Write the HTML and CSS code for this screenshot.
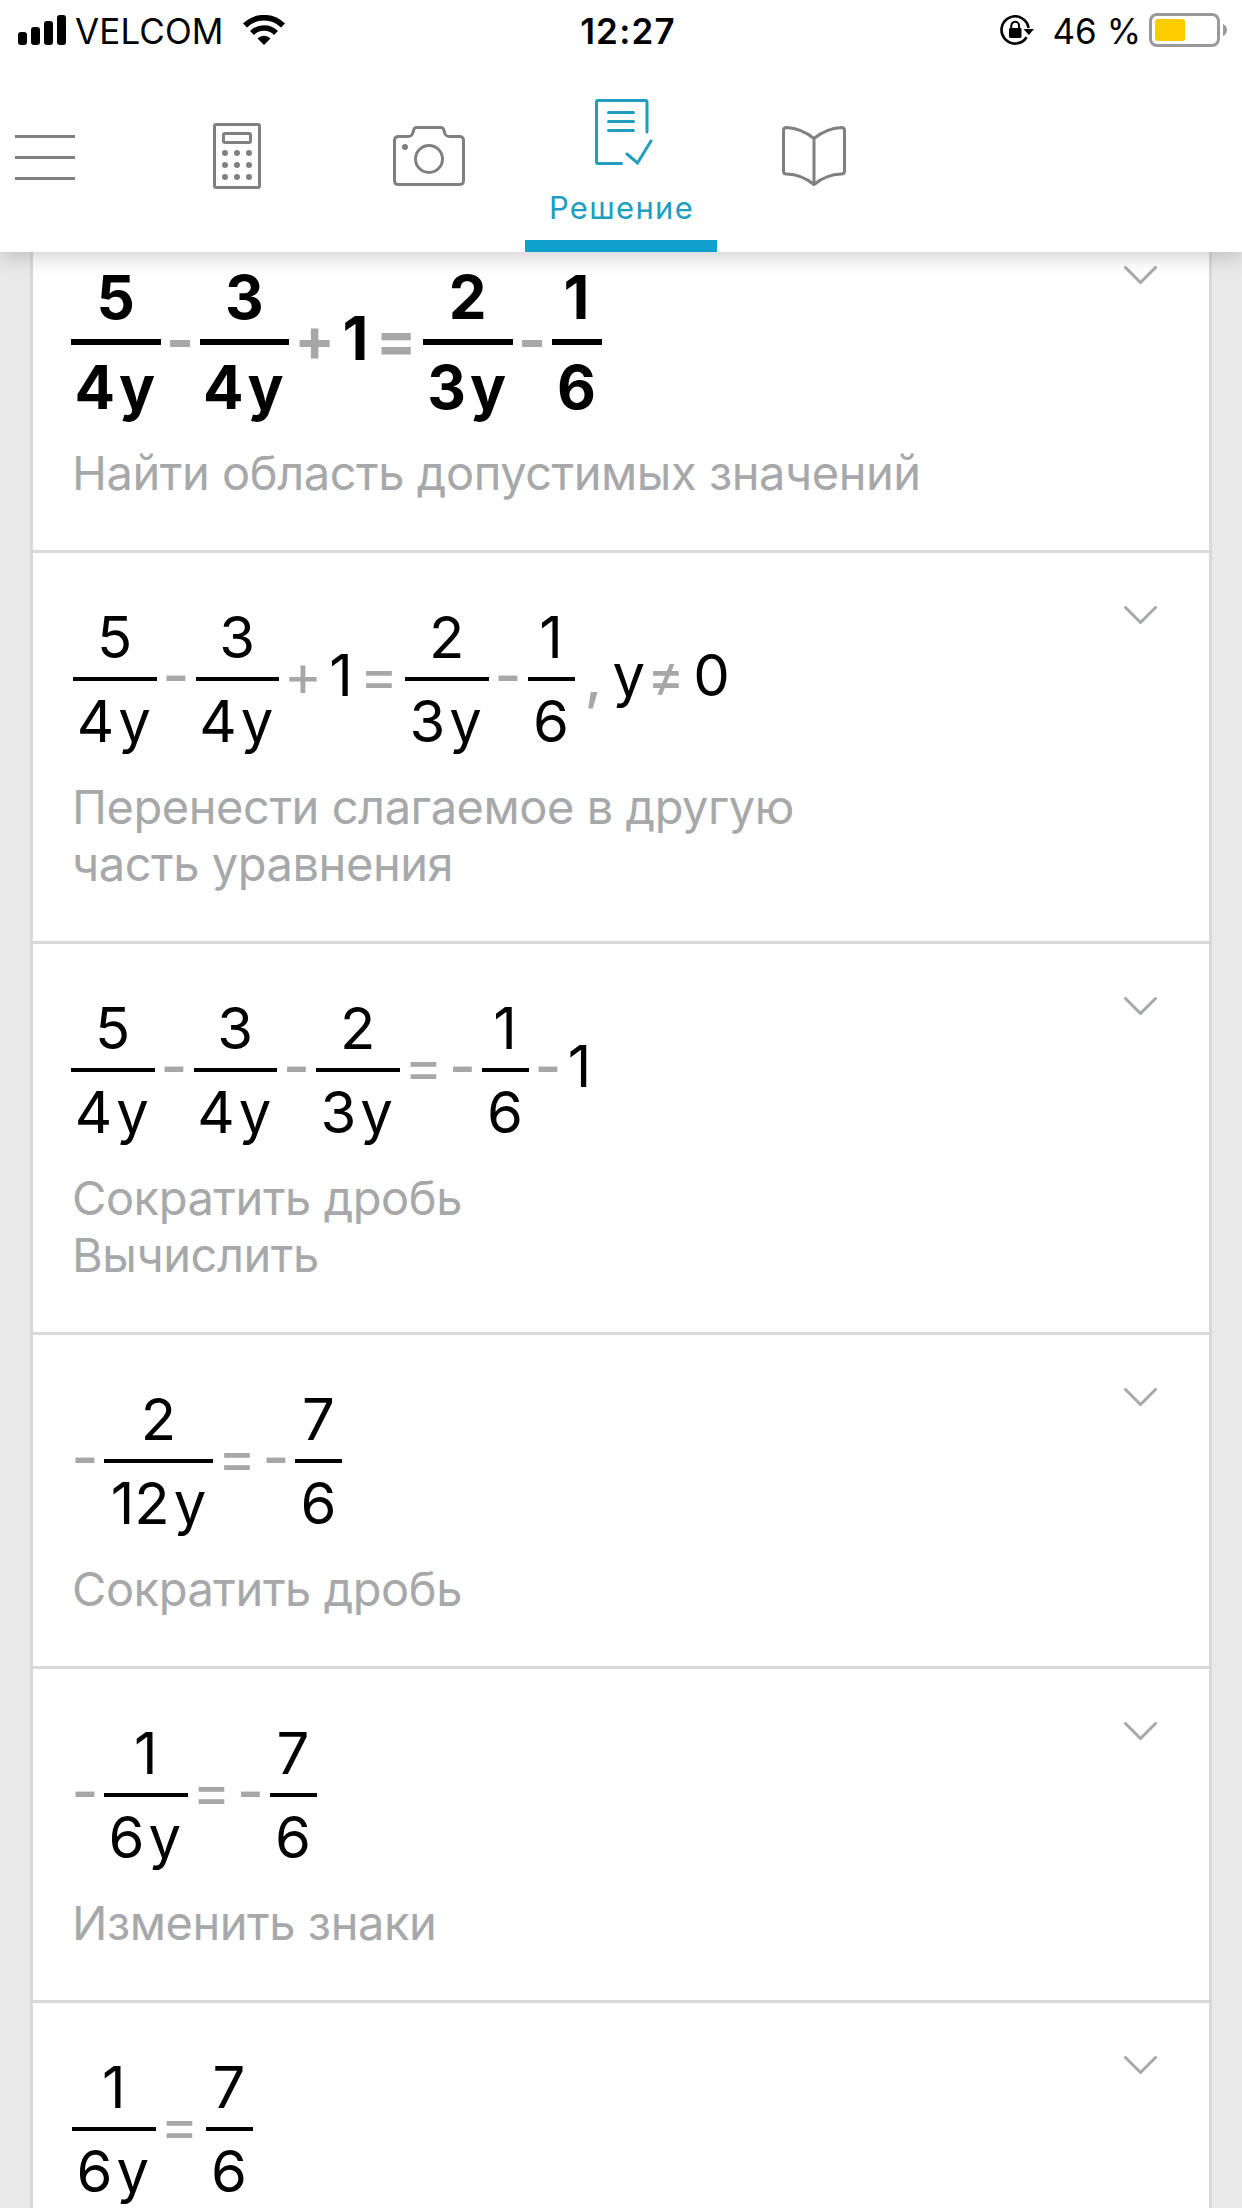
FILE: index.html
```html
<!DOCTYPE html>
<html lang="ru">
<head>
  <meta charset="UTF-8" />
  <meta name="viewport" content="width=device-width, initial-scale=1" />
  <title>Решение</title>
  <link rel="stylesheet" href="styles.css">
</head>
<body>

  <header class="header">
    <div class="status">
      <div class="status-left">
        <svg class="signal" width="48" height="30" viewBox="0 0 48 30">
          <rect x="0" y="17" width="9" height="13" rx="3" />
          <rect x="13" y="12" width="9" height="18" rx="3" />
          <rect x="26" y="6" width="9" height="24" rx="3" />
          <rect x="39" y="0" width="9" height="30" rx="3" />
        </svg>
        <span class="carrier">VELCOM</span>
        <svg class="wifi" width="42" height="30" viewBox="0 0 42 30">
          <path d="M2 10.500a27 27 0 0 1 38 0" fill="none" stroke="#000" stroke-width="5.600" />
          <path d="M9 18a17 17 0 0 1 24 0" fill="none" stroke="#000" stroke-width="5.600" />
          <path d="M14.500 23.500a9.300 9.300 0 0 1 13 0L21 30z" />
        </svg>
      </div>
      <div class="time">12:27</div>
      <div class="status-right">
        <svg class="lock" width="34" height="30" viewBox="0 0 34 30">
          <path d="M28.600 13A13.600 13.600 0 1 0 26.600 22.300" fill="none" stroke="#000" stroke-width="2.600" />
          <path d="M23.500 14h10.500l-5.200 6z" />
          <rect x="9" y="13" width="12.500" height="10" rx="1.400" />
          <path d="M11.300 14v-3.300a3.900 3.900 0 0 1 7.800 0V14" fill="none" stroke="#000" stroke-width="2" />
        </svg>
        <span class="percent">46 %</span>
        <svg class="battery" width="78" height="34" viewBox="0 0 78 34">
          <rect x="1.500" y="1.500" width="68" height="31" rx="6.500" fill="none" stroke="#999" stroke-width="3" />
          <rect x="6" y="6" width="30" height="22" rx="2.500" fill="#fc0" />
          <path d="M74 11q4 2 4 6t-4 6z" fill="#999" />
        </svg>
      </div>
    </div>

    <nav class="tabs">
      <a class="menu">
        <svg width="60" height="45" viewBox="0 0 60 45"><path d="M0 1.500h60M0 22.500h60M0 43.500h60" /></svg>
      </a>
      <a class="tab">
        <svg width="48" height="66" viewBox="0 0 48 66">
          <rect x="1.500" y="1.500" width="45" height="63" rx="1.500" />
          <rect x="10.500" y="10.500" width="27" height="9" rx="1.500" />
          <g class="dots">
            <circle cx="12" cy="30" r="3" /><circle cx="24" cy="30" r="3" /><circle cx="36" cy="30" r="3" />
            <circle cx="12" cy="42" r="3" /><circle cx="24" cy="42" r="3" /><circle cx="36" cy="42" r="3" />
            <circle cx="12" cy="54" r="3" /><circle cx="24" cy="54" r="3" /><circle cx="36" cy="54" r="3" />
          </g>
        </svg>
      </a>
      <a class="tab">
        <svg width="72" height="60" viewBox="0 0 72 60">
          <path d="M5.500 10.500H15q4 0 5-4l.7-2.500q.6-2.500 2.800-2.500H48q2.200 0 2.800 2.500l.7 2.500q1 4 5 4h10q4 0 4 4v40q0 4-4 4h-61q-4 0-4-4v-40q0-4 4-4z" />
          <circle cx="36" cy="33" r="13.500" />
          <g class="dots"><circle cx="12" cy="21" r="3" /></g>
        </svg>
      </a>
      <a class="tab active">
        <svg width="58" height="66" viewBox="0 0 58 66">
          <path d="M52 33V3q0-1.500-1.500-1.500H3Q1.500 1.500 1.500 3v60q0 1.500 1.500 1.500h23.500M13.500 13.500h25M13.500 22.500h25M13.500 31.500h25M32 55l10.500 9L56 42" />
        </svg>
        <span class="tab-label">Решение</span>
      </a>
      <a class="tab book">
        <svg width="64" height="60" viewBox="0 0 64 60">
          <path d="M32 12.500Q20 2.500 4.500 1.500q-3 0-3 3V45q0 3 3 3Q20 48.500 32 58.500 44 48.500 59.500 48q3 0 3-3V4.500q0-3-3-3Q44 2.500 32 12.500zM32 12.500v46" />
        </svg>
      </a>
    </nav>
  </header>

  <main class="steps">
    <section class="step first">
      <div class="body">
        <div class="math">
          <span class="frac wide"><span>5</span><span>4<b>y</b></span></span>
          <span class="op">-</span>
          <span class="frac wide"><span>3</span><span>4<b>y</b></span></span>
          <span class="op plus">+</span>
          <span class="num">1</span>
          <span class="op eq">=</span>
          <span class="frac wide"><span>2</span><span>3<b>y</b></span></span>
          <span class="op">-</span>
          <span class="frac"><span>1</span><span>6</span></span>
        </div>
        <p class="hint">Найти область допустимых значений</p>
      </div>
      <svg class="chevron" width="33" height="18" viewBox="0 0 33 18"><path d="M1.500 1.500l15 15 15-15" /></svg>
    </section>

    <section class="step">
      <div class="body">
        <div class="math indent">
          <span class="frac wide"><span>5</span><span>4<b>y</b></span></span>
          <span class="op">-</span>
          <span class="frac wide"><span>3</span><span>4<b>y</b></span></span>
          <span class="op plus">+</span>
          <span class="num">1</span>
          <span class="op eq">=</span>
          <span class="frac wide"><span>2</span><span>3<b>y</b></span></span>
          <span class="op">-</span>
          <span class="frac"><span>1</span><span>6</span></span>
          <span class="op comma">,</span>
          <span class="num">y</span>
          <span class="op neq">≠</span>
          <span class="num zero">0</span>
        </div>
        <p class="hint">Перенести слагаемое в другую<br>часть уравнения</p>
      </div>
      <svg class="chevron" width="33" height="18" viewBox="0 0 33 18"><path d="M1.500 1.500l15 15 15-15" /></svg>
    </section>

    <section class="step">
      <div class="body">
        <div class="math">
          <span class="frac wide"><span>5</span><span>4<b>y</b></span></span>
          <span class="op">-</span>
          <span class="frac wide"><span>3</span><span>4<b>y</b></span></span>
          <span class="op">-</span>
          <span class="frac wide"><span>2</span><span>3<b>y</b></span></span>
          <span class="op eq">=</span>
          <span class="op sign">-</span>
          <span class="frac"><span>1</span><span>6</span></span>
          <span class="op">-</span>
          <span class="num last">1</span>
        </div>
        <p class="hint">Сократить дробь<br>Вычислить</p>
      </div>
      <svg class="chevron" width="33" height="18" viewBox="0 0 33 18"><path d="M1.500 1.500l15 15 15-15" /></svg>
    </section>

    <section class="step">
      <div class="body">
        <div class="math shift">
          <span class="op sign">-</span>
          <span class="frac wider"><span>2</span><span>12<b>y</b></span></span>
          <span class="op eq">=</span>
          <span class="op sign">-</span>
          <span class="frac"><span>7</span><span>6</span></span>
        </div>
        <p class="hint">Сократить дробь</p>
      </div>
      <svg class="chevron" width="33" height="18" viewBox="0 0 33 18"><path d="M1.500 1.500l15 15 15-15" /></svg>
    </section>

    <section class="step">
      <div class="body">
        <div class="math shift">
          <span class="op sign">-</span>
          <span class="frac wide"><span>1</span><span>6<b>y</b></span></span>
          <span class="op eq">=</span>
          <span class="op sign">-</span>
          <span class="frac"><span>7</span><span>6</span></span>
        </div>
        <p class="hint">Изменить знаки</p>
      </div>
      <svg class="chevron" width="33" height="18" viewBox="0 0 33 18"><path d="M1.500 1.500l15 15 15-15" /></svg>
    </section>

    <section class="step">
      <div class="body">
        <div class="math shift">
          <span class="frac wide"><span>1</span><span>6<b>y</b></span></span>
          <span class="op eq">=</span>
          <span class="frac"><span>7</span><span>6</span></span>
        </div>
      </div>
      <svg class="chevron" width="33" height="18" viewBox="0 0 33 18"><path d="M1.500 1.500l15 15 15-15" /></svg>
    </section>
  </main>

</body>
</html>
```
FILE: styles.css
```css
* {
  box-sizing: border-box;
}

body {
  margin: 0;
  height: 2208px;
  overflow: hidden;
  background: #e9e9e9;
  font-family: Inter, "Liberation Sans", sans-serif;
  color: #000;
}

svg {
  display: block;
  flex: none;
}

.header {
  position: relative;
  z-index: 1;
  height: 252px;
  background: #fff;
  box-shadow: 0 4px 20px rgba(0, 0, 0, 0.2);
}

/* status bar */
.status {
  display: grid;
  grid-template-columns: 1fr auto 1fr;
  align-items: center;
  height: 60px;
  padding: 0 15px 0 18px;
  font-size: 35px;
  line-height: 58px;
}

.status-left,
.status-right {
  display: flex;
  align-items: center;
}

.status-right {
  justify-content: flex-end;
}

.status span,
.time {
  padding-top: 2px;
}

.carrier {
  margin-left: 9px;
  letter-spacing: 0.1px;
}

.wifi {
  margin-left: 19px;
}

.time {
  font-weight: 600;
  letter-spacing: 1.2px;
  padding-left: 11px;
}

.percent {
  margin: 0 8px 0 18px;
}

/* tabs */
.tabs {
  display: flex;
  height: 192px;
  padding-left: 15px;
}

.menu {
  display: flex;
  align-items: center;
  width: 126px;
  padding-top: 3px;
}

.tab {
  display: flex;
  flex-direction: column;
  align-items: center;
  justify-content: center;
  width: 192px;
}

.tab.book {
  padding-left: 2px;
}

.tabs svg {
  fill: none;
  stroke: #808080;
  stroke-width: 3;
}

.tabs .dots {
  fill: #808080;
  stroke: none;
}

.tab.active {
  justify-content: flex-start;
  padding-top: 39px;
  border-bottom: 12px solid #0fa1cd;
}

.tab.active svg {
  stroke: #219dbf;
  stroke-linecap: round;
  margin-left: 5px;
}

.tab-label {
  margin-top: 23px;
  padding-left: 1px;
  font-size: 31px;
  line-height: 40px;
  letter-spacing: 1.3px;
  color: #219dbf;
}

/* solution steps */
.steps {
  height: 1995px;
  margin: -39px 30px 0;
  border: solid #d9d9d9;
  border-width: 0 3px;
  background: #fff;
  overflow: hidden;
}

.step {
  display: flex;
  justify-content: space-between;
  height: 334px;
  padding: 53px 52px 0 38px;
  border-bottom: 3px solid #d9d9d9;
}

.step:nth-child(2),
.step:nth-child(3) {
  height: 391px;
}

.step.first {
  height: 340px;
}

.math {
  display: flex;
  align-items: center;
  height: 144px;
  margin-top: 1px;
  font-size: 58px;
  line-height: 60px;
  white-space: nowrap;
}

.math.indent {
  padding-left: 2px;
}

.math.shift {
  padding-left: 1px;
}

.frac {
  flex: none;
  width: 47px;
  text-align: center;
}

.frac.wide {
  width: 83.5px;
}

.frac.wider {
  width: 109px;
}

.frac span {
  display: block;
}

.frac span:first-child {
  padding-bottom: 10px;
  border-bottom: 4px solid #000;
  margin-bottom: 10px;
}

.frac b {
  font-weight: inherit;
  margin-left: 4px;
}

.frac.wide span:last-child {
  padding-right: 2px;
}

.num {
  width: 28px;
  padding-bottom: 8px;
  text-align: center;
}

.num.zero {
  width: 40px;
}

.num.last {
  width: 24px;
}

.op {
  display: flex;
  justify-content: center;
  width: 39px;
  padding-bottom: 8px;
  font-weight: 500;
  color: #a7a7a7;
}

.op.sign {
  width: 32px;
  padding-right: 6px;
}

.op.plus {
  width: 48px;
  font-weight: 400;
}

.op.eq {
  width: 50px;
  padding-right: 2px;
  font-weight: 400;
}

.op.comma {
  width: 38px;
  padding-bottom: 4px;
}

.op.neq {
  width: 51px;
  font-weight: 400;
}

.first .math {
  height: 152px;
  margin-top: 0;
  font-size: 60px;
  font-weight: 700;
  line-height: 62px;
}

.first .math .op {
  font-weight: 700;
  padding-bottom: 6px;
}

.first .frac {
  width: 50px;
}

.first .frac.wide {
  width: 89.5px;
}

.first .frac span:first-child {
  padding-bottom: 11px;
  border-bottom-width: 6px;
  margin-bottom: 11px;
}

.first .op.plus {
  width: 51px;
}

.first .num {
  width: 31px;
}

.first .op.eq {
  width: 52px;
}

.hint {
  margin: 27px 0 0 1px;
  font-size: 47px;
  line-height: 57px;
  letter-spacing: -0.45px;
  color: #a7a8aa;
}

.first .hint {
  margin-top: 26px;
}

.chevron {
  fill: none;
  stroke: #a7a8aa;
  stroke-width: 3;
  stroke-linecap: round;
}
```
